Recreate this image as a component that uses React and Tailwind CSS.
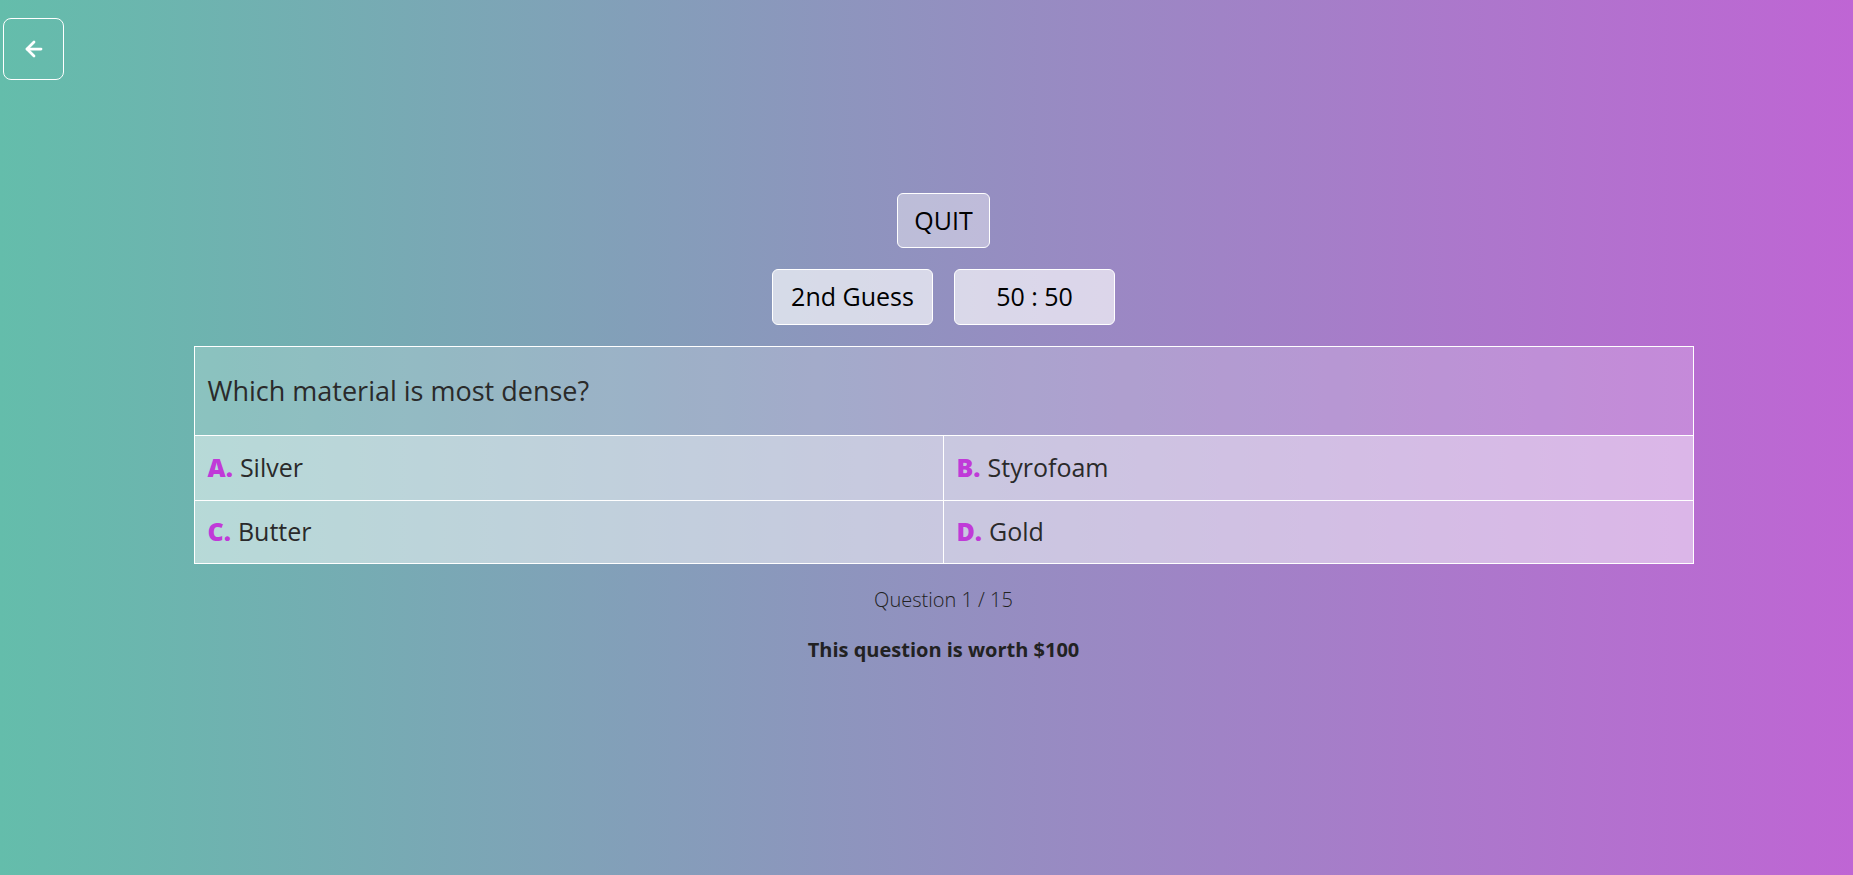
import { ArrowLeft } from "lucide-react";

const answers = [
  { key: "A", text: "Silver" },
  { key: "B", text: "Styrofoam" },
  { key: "C", text: "Butter" },
  { key: "D", text: "Gold" },
];

export default function App() {
  return (
    <div
      className="min-h-screen w-full bg-[linear-gradient(to_right,#64bdab,#bf65d4)] text-[#222] relative"
      style={{ fontFamily: '"Open Sans", "Liberation Sans", sans-serif' }}
    >
      <button className="absolute left-[3px] top-[18px] w-[61px] h-[62px] rounded-lg border border-white flex items-center justify-center text-white">
        <ArrowLeft size={24} strokeWidth={2.75} />
      </button>

      <div className="flex flex-col items-center pl-[34px] pt-[193px]">
        <button className="h-[55px] w-[93px] rounded-md border border-white bg-white/40 text-[25px] text-black">
          QUIT
        </button>

        <div className="flex gap-[21px] mt-[21px]">
          <button className="h-[56px] w-[161px] rounded-md border border-white bg-white/65 text-[25px] text-black">
            2nd Guess
          </button>
          <button className="h-[56px] w-[161px] rounded-md border border-white bg-white/65 text-[25px] text-black">
            50 : 50
          </button>
        </div>

        <div className="mt-[21px] w-[1500px] border border-white">
          <div className="h-[88px] bg-white/20 flex items-center px-[13px] text-[27px] text-[#2a2a2a]">
            Which material is most dense?
          </div>
          <div className="grid grid-cols-2">
            {answers.map((a, i) => (
              <div
                key={a.key}
                className={
                  "bg-white/50 border-t border-white flex items-center px-[13px] text-[25px] text-[#2a2a2a] " +
                  (i < 2 ? "h-[65px] " : "h-[63px] ") +
                  (i % 2 === 0 ? "border-r" : "")
                }
              >
                <span className="font-extrabold text-[#c03ad8] mr-[7px]">{a.key}.</span>
                {a.text}
              </div>
            ))}
          </div>
        </div>

        <p className="mt-[21px] text-[20px] font-light text-[#222]">Question 1 / 15</p>
        <p className="mt-[20px] text-[20px] font-bold text-[#222]">This question is worth $100</p>
      </div>
    </div>
  );
}
